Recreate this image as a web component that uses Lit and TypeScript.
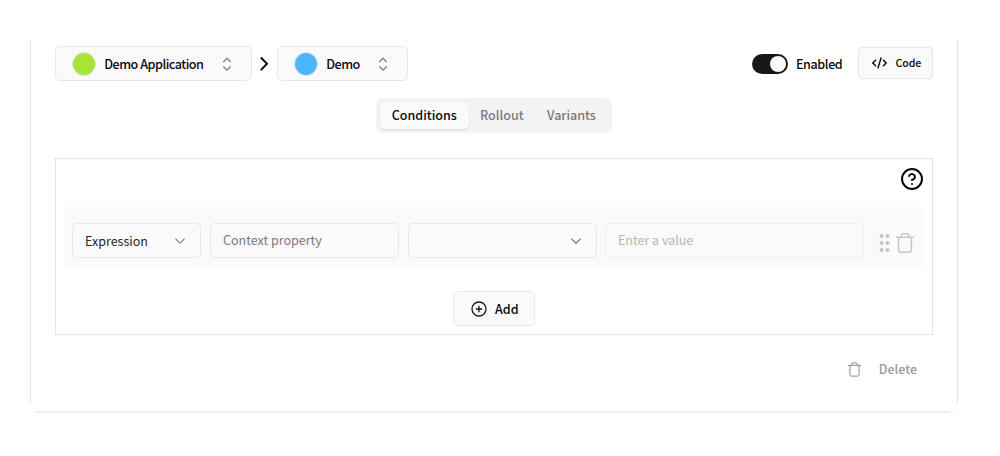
import { LitElement, html, css, svg } from "lit";
import { customElement, property } from "lit/decorators.js";

const trash = (cls: string, sw: number) => html`<svg class=${cls} viewBox="0 0 18 20" fill="none" stroke="currentColor" stroke-width=${sw}>
  <path d="M0 4.2H18M2.6 4.2V17a2.2 2.2 0 0 0 2.2 2.2h8.4a2.2 2.2 0 0 0 2.2-2.2V4.2M5.2 4.2V2.6A1.8 1.8 0 0 1 7 .8h4a1.8 1.8 0 0 1 1.8 1.8v1.6" />
</svg>`;

const dots = [4, 11, 18].map((y) => [3.5, 9.5].map((x) => svg`<circle cx=${x} cy=${y} r="2" />`));

@customElement("project-select")
class ProjectSelect extends LitElement {
  @property() label = "";
  @property() color = "";

  static styles = css`
    :host { display: flex; align-items: center; box-sizing: border-box; height: 35px; margin-top: 1px;
      border: 1px solid #e8e8ea; border-radius: 5px; background: #fafafa;
      padding: 0 18px 0 16px; font-size: 12.6px; font-weight: 500; letter-spacing: -0.5px; color: #09090b; }
    .dot { box-sizing: border-box; width: 24px; height: 24px; border-radius: 50%; border: 1px solid #e4e6e4; margin-right: 8.3px; flex: none; }
    .name { flex: 1; white-space: nowrap; line-height: 20px; padding-top: 1px; }
    .arrows { width: 12px; height: 16px; flex: none; color: #85858a; }
  `;

  render() {
    return html`<span class="dot" style="background:${this.color}"></span>
      <span class="name">${this.label}</span>
      <svg class="arrows" viewBox="0 0 12 16" fill="none" stroke="currentColor" stroke-width="1.4"><path d="M2.3 5.9 6 2.3l3.7 3.6M2.3 10.4l3.7 3.6 3.7-3.6" /></svg>`;
  }
}

@customElement("app-root")
class AppRoot extends LitElement {
  static styles = css`
    * { box-sizing: border-box; }
    :host { display: block; box-sizing: border-box; height: 456px; overflow: hidden; background: #fff; padding: 40px 42px 0 30px;
      font-family: "Noto Sans CJK SC", sans-serif; font-size: 12.5px; line-height: 20px; color: #09090b; }
    svg { display: block; flex: none; }
    .card { height: 373px; border-radius: 0 0 12px 4px; padding: 5px 25px 0; box-shadow: inset 0 -1px #f1f1f2;
      background:
        linear-gradient(#e4e4e7, #e4e4e7) 0 0 / 1px 363px no-repeat,
        linear-gradient(#e4e4e7, #e4e4e7) 100% 0 / 1px 364px no-repeat,
        linear-gradient(#e9e9ea, #f0f0f1) 50% 100% / calc(100% - 14px) 2px no-repeat; }
    .head { display: flex; align-items: center; height: 36px; }
    .app { width: 197px; }
    .env { width: 131px; }
    .crumb { width: 10px; height: 16px; margin: 1px 8px 0 7px; }
    .switch { width: 36px; height: 20px; border-radius: 10px; background: #18181b; padding: 2px; margin: 1px 0 0 auto; }
    .knob { width: 16px; height: 16px; border-radius: 50%; background: #fafafa; margin-left: 16px; }
    .enabled { width: 47px; font-weight: 500; letter-spacing: -0.38px; white-space: nowrap; margin: 2px 15px 0 8px; }
    .code { display: flex; align-items: center; width: 75px; height: 32px; border: 1px solid #e8e8ea; border-radius: 5px;
      background: #fafafa; padding-left: 12px; font-size: 10.6px; font-weight: 500; letter-spacing: -0.1px; box-shadow: 0 0 1px #ddd; }
    .code svg { width: 17px; height: 14px; margin-right: 7.5px; }
    .tabs { display: flex; width: 236px; height: 35px; margin: 17px auto 0; padding: 4px; border-radius: 7px; background: #f3f3f3; font-weight: 500; color: #79797f; }
    .tab { display: flex; align-items: center; justify-content: center; height: 27px; padding: 0 12px 1px; }
    .tab.active { width: 88.5px; background: #fafafa; color: #09090b; border-radius: 5px; box-shadow: 0 1px 2px #0000001a; }
    .tab + .tab { padding-left: 11.5px; }
    .panel { height: 177px; margin-top: 25px; border: 1px solid #e5e5e7; padding: 7.5px 8px 8px; display: flex; flex-direction: column; }
    .help { width: 24px; height: 24px; align-self: flex-end; }
    .row { display: flex; flex: none; align-items: center; height: 60px; margin-top: 16.5px; padding: 0 8px; background: #fafafa; }
    .field { display: flex; align-items: center; height: 35px; padding: 0 12px; border: 1px solid #e8e8ea; border-radius: 5px;
      margin: 7px 9px 0 0; justify-content: space-between; color: #79797f; }
    .field .text { padding-bottom: 1px; }
    .kind { width: 129px; color: #27272a; }
    .kind .text { padding: 1px 0 0; }
    .prop { width: 189px; }
    .op { width: 189px; justify-content: flex-end; margin-right: 8px; }
    .value { width: 259px; color: #b5b5b8; border-color: #f0f0f1; }
    .chev { width: 16px; height: 16px; color: #8a8a8e; }
    .grip { width: 13px; height: 22px; color: #c6c6c6; margin: 12px 5px 0 4.5px; }
    .trash { width: 18px; height: 20px; color: #c6c6c6; margin-top: 11px; }
    .add { display: flex; flex: none; align-items: center; width: 82px; height: 35px; align-self: center; margin-top: 24px;
      border: 1px solid #e8e8ea; border-radius: 5px; background: #fafafa; padding-left: 17px; font-weight: 500; }
    .add svg { width: 16px; height: 16px; margin-right: 8px; }
    .add span { padding-top: 1px; }
    .foot { display: flex; align-items: center; justify-content: flex-end; height: 36px; margin-top: 16px; padding-right: 16px; color: #9b9b9d; font-weight: 500; }
    .small-trash { width: 13px; height: 15px; margin-right: 17.5px; color: #848487; }
  `;

  render() {
    return html`<main class="card">
      <header class="head">
        <project-select class="app" label="Demo Application" color="#a9e536"></project-select>
        <svg class="crumb" viewBox="0 0 10 16" fill="none" stroke="#09090b" stroke-width="2"><path d="m1.8 1.5 6.2 6.3-6.2 6.3" /></svg>
        <project-select class="env" label="Demo" color="#4cb5fc"></project-select>
        <span class="switch"><div class="knob"></div></span>
        <span class="enabled">Enabled</span>
        <div class="code">
          <svg viewBox="0 0 17 14" fill="none" stroke="#09090b" stroke-width="1.4"><path d="M5 3.8 1.8 7 5 10.2M12 3.8 15.2 7 12 10.2M10.2 1.5 6.8 12.5" /></svg>
          <span>Code</span>
        </div>
      </header>
      <nav class="tabs"><span class="tab active">Conditions</span><span class="tab">Rollout</span><span class="tab">Variants</span></nav>
      <section class="panel">
        <svg class="help" viewBox="0 0 24 24" fill="none" stroke="#09090b" stroke-width="2" stroke-linecap="round"><circle cx="12" cy="12" r="10" /><path d="M9.1 9a3 3 0 0 1 5.8 1c0 2-3 3-3 3M12 17h.01" /></svg>
        <div class="row">
          <div class="field kind"><span class="text">Expression</span>
            <svg class="chev" viewBox="0 0 16 16" fill="none" stroke="currentColor" stroke-width="1.2"><path d="m3.5 5.8 4.5 4.4 4.5-4.4" /></svg></div>
          <div class="field prop"><span class="text">Context property</span></div>
          <div class="field op"><svg class="chev" viewBox="0 0 16 16" fill="none" stroke="currentColor" stroke-width="1.6"><path d="m3.5 5.8 4.5 4.4 4.5-4.4" /></svg></div>
          <div class="field value"><span class="text">Enter a value</span></div>
          <svg class="grip" viewBox="0 0 13 22" fill="currentColor">${dots}</svg>
          ${trash("trash", 1.5)}
        </div>
        <div class="add">
          <svg viewBox="0 0 16 16" fill="none" stroke="#18181b" stroke-width="1.3"><circle cx="8" cy="8" r="7" /><path d="M8 4.8v6.4M4.8 8h6.4" /></svg>
          <span>Add</span>
        </div>
      </section>
      <footer class="foot">${trash("small-trash", 1.3)}<span>Delete</span></footer>
    </main>`;
  }
}
